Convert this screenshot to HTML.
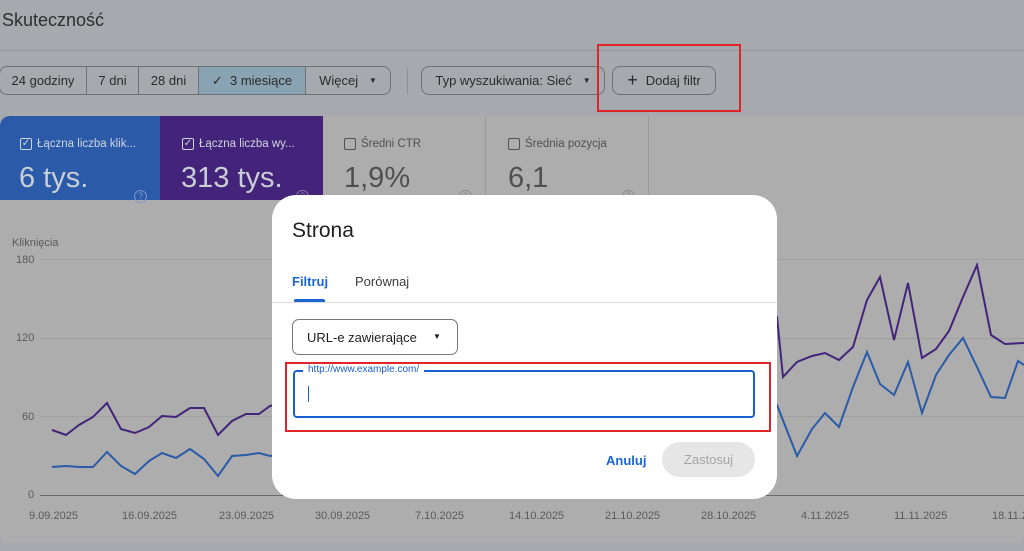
<!DOCTYPE html>
<html><head><meta charset="utf-8"><style>
*{margin:0;padding:0;box-sizing:border-box}
body{width:1024px;height:551px;overflow:hidden;background:#a6a9ad;font-family:"Liberation Sans",sans-serif;position:relative;color:#2a2a2a}
.a{position:absolute}
.seg{position:absolute;top:66px;height:29px;border:1px solid #6f7275;font-size:13px;color:#2b2b2b;display:flex;align-items:center;justify-content:center}
.lbl{font-size:11.5px;color:#cfd4e0;display:flex;align-items:center;gap:5px}
.cb{width:12px;height:12px;border:1px solid currentColor;border-radius:2px;display:inline-block;position:relative;font-size:10px;line-height:10px;text-align:center}
.big{font-size:29px}
.ax{font-size:11px;color:#5a5a5a}
.q{position:absolute;top:74px;width:13px;height:13px;border:1.5px solid;border-radius:50%;font-size:9px;text-align:center;line-height:10px}
</style></head><body>
<div class="a" style="left:2px;top:10px;font-size:18px;color:#2e2e2e">Skuteczność</div>
<div class="a" style="left:0;top:50px;width:1024px;height:1px;background:#94989c"></div>
<div class="seg" style="left:-1px;width:88px;border-radius:8px 0 0 8px">24 godziny</div>
<div class="seg" style="left:86px;width:53px">7 dni</div>
<div class="seg" style="left:138px;width:61px">28 dni</div>
<div class="seg" style="left:198px;width:108px;background:#8aa3b3">✓&nbsp;&nbsp;3 miesiące</div>
<div class="seg" style="left:305px;width:86px;border-radius:0 8px 8px 0">Więcej&nbsp;&nbsp;&nbsp;<span style="font-size:8px">▼</span></div>
<div class="a" style="left:407px;top:68px;width:1px;height:26px;background:#8c9094"></div>
<div class="seg" style="left:421px;width:184px;border-radius:8px">Typ wyszukiwania: Sieć&nbsp;&nbsp;&nbsp;<span style="font-size:8px">▼</span></div>
<div class="seg" style="left:612px;width:104px;border-radius:8px"><span style="font-size:18px;font-weight:300;margin-right:8px">+</span>Dodaj filtr</div>
<div class="a" style="left:597px;top:44px;width:144px;height:68px;border:2px solid #e0242a"></div>

<div class="a" style="left:0;top:116px;width:1024px;height:427px;background:#adadad;border-radius:10px 0 10px 10px;overflow:hidden">
 <div class="a" style="left:0;top:0;width:160px;height:84px;background:#2b5ba8"></div>
 <div class="a" style="left:160px;top:0;width:163px;height:84px;background:#43247a"></div>
 <div class="a" style="left:485px;top:0;width:1px;height:84px;background:#9a9a9a"></div>
 <div class="a" style="left:648px;top:0;width:1px;height:84px;background:#9a9a9a"></div>
 <div class="a lbl" style="left:20px;top:22px"><span class="cb">✓</span>Łączna liczba klik...</div>
 <div class="a lbl" style="left:182px;top:22px"><span class="cb">✓</span>Łączna liczba wy...</div>
 <div class="a lbl" style="left:344px;top:22px;color:#505050"><span class="cb"></span>Średni CTR</div>
 <div class="a lbl" style="left:508px;top:22px;color:#505050"><span class="cb"></span>Średnia pozycja</div>
 <div class="a big" style="left:19px;top:46px;color:#c9cdd6">6 tys.</div>
 <div class="a big" style="left:181px;top:46px;color:#c9cdd6">313 tys.</div>
 <div class="a big" style="left:344px;top:46px;color:#505050">1,9%</div>
 <div class="a big" style="left:508px;top:46px;color:#505050">6,1</div>
 <div class="q" style="left:134px;color:#7d99c8">?</div>
 <div class="q" style="left:296px;color:#8a78a8">?</div>
 <div class="q" style="left:459px;color:#8a8a8a">?</div>
 <div class="q" style="left:622px;color:#8a8a8a">?</div>
</div>
<div class="a ax" style="left:12px;top:237px">Kliknięcia</div>
<div class="a ax" style="left:16px;top:254px">180</div>
<div class="a ax" style="left:16px;top:332px">120</div>
<div class="a ax" style="left:22px;top:411px">60</div>
<div class="a ax" style="left:28px;top:489px">0</div>
<svg class="a" style="left:0;top:0" width="1024" height="551">
<g stroke="#a0a0a0" stroke-width="1"><line x1="40" y1="259.5" x2="1024" y2="259.5"/><line x1="40" y1="338.5" x2="1024" y2="338.5"/><line x1="40" y1="416.5" x2="1024" y2="416.5"/></g>
<line x1="40" y1="495.5" x2="1024" y2="495.5" stroke="#6a6a6a"/>
<polyline fill="none" stroke="#43247a" stroke-width="2" points="52,430 66,435 79,425 93,417 107,403 121,429 135,433 149,427 162,416 176,417 190,408 204,408 218,435 232,421 246,414 259,414 270,406 300,400 777,317 783,377 797,362 812,356 825,353 839,360 853,347 867,300 880,277 894,340 908,283 922,358 936,349 949,331 963,297 977,265 991,335 1005,344 1024,343"/>
<polyline fill="none" stroke="#2b5ba8" stroke-width="2" points="52,467 66,466 79,467 93,467 107,452 121,466 135,474 149,461 162,453 176,458 190,449 204,459 218,476 232,456 246,455 259,453 270,456 300,450 777,405 797,456 812,429 825,413 839,427 853,387 867,352 880,384 894,395 908,362 922,413 936,375 949,355 963,338 977,367 991,397 1005,398 1018,361 1024,365"/>
</svg>
<div class="a ax" style="left:29px;top:510px">9.09.2025</div>
<div class="a ax" style="left:122px;top:510px">16.09.2025</div>
<div class="a ax" style="left:219px;top:510px">23.09.2025</div>
<div class="a ax" style="left:315px;top:510px">30.09.2025</div>
<div class="a ax" style="left:415px;top:510px">7.10.2025</div>
<div class="a ax" style="left:509px;top:510px">14.10.2025</div>
<div class="a ax" style="left:605px;top:510px">21.10.2025</div>
<div class="a ax" style="left:701px;top:510px">28.10.2025</div>
<div class="a ax" style="left:801px;top:510px">4.11.2025</div>
<div class="a ax" style="left:894px;top:510px">11.11.2025</div>
<div class="a ax" style="left:992px;top:510px">18.11.2025</div>

<div class="a" style="left:272px;top:195px;width:505px;height:304px;background:#fff;border-radius:24px">
 <div class="a" style="left:20px;top:24px;font-size:21px;color:#1f1f1f">Strona</div>
 <div class="a" style="left:20px;top:79px;font-size:13px;color:#1a66d2;font-weight:bold">Filtruj</div>
 <div class="a" style="left:83px;top:79px;font-size:13px;color:#3c3c3c">Porównaj</div>
 <div class="a" style="left:22px;top:104px;width:31px;height:3px;background:#1a66d2;border-radius:2px 2px 0 0"></div>
 <div class="a" style="left:0;top:107px;width:505px;height:1px;background:#dcdcdc"></div>
 <div class="a" style="left:20px;top:124px;width:166px;height:36px;border:1px solid #777;border-radius:7px;font-size:13px;color:#1f1f1f;padding:10px 0 0 14px">URL-e zawierające<span style="position:absolute;left:140px;top:12px;font-size:8px">▼</span></div>
 <div class="a" style="left:13px;top:167px;width:486px;height:70px;border:2px solid #e0242a"></div>
 <div class="a" style="left:21px;top:175px;width:462px;height:48px;border:2px solid #1a5fd0;border-radius:4px"></div>
 <div class="a" style="left:31px;top:169px;background:#fff;padding:0 5px;font-size:10px;color:#1a5fd0">http://www.example.com/</div>
 <div class="a" style="left:36px;top:191px;width:1px;height:16px;background:#1a5fd0"></div>
 <div class="a" style="left:334px;top:258px;font-size:13px;color:#1a66d2;font-weight:bold">Anuluj</div>
 <div class="a" style="left:390px;top:247px;width:93px;height:35px;border-radius:18px;background:#e6e6e6;font-size:13px;color:#a5a5a5;text-align:center;line-height:35px">Zastosuj</div>
</div>
</body></html>
